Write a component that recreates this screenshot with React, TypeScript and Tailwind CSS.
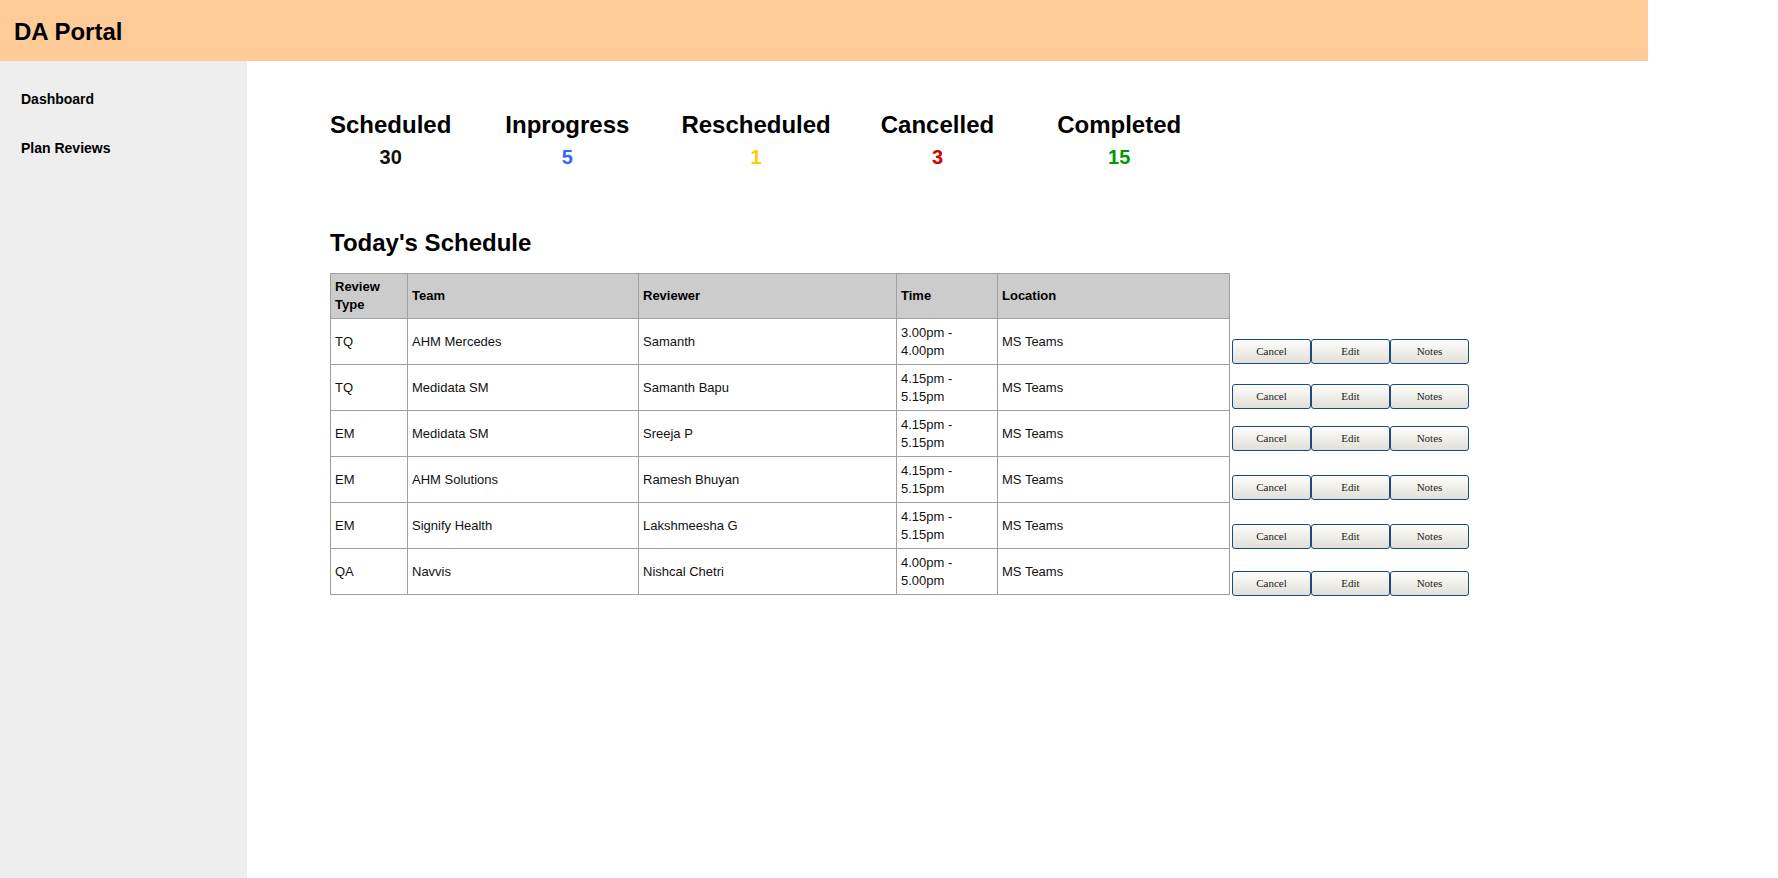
import React from "react";

const stats = [
  { label: "Scheduled", value: "30", color: "text-[#111111]", mr: "mr-[54px]" },
  { label: "Inprogress", value: "5", color: "text-[#3366ff]", mr: "mr-[52px]" },
  { label: "Rescheduled", value: "1", color: "text-[#ffcc00]", mr: "mr-[50px]" },
  { label: "Cancelled", value: "3", color: "text-[#cc0000]", mr: "mr-[63px]" },
  { label: "Completed", value: "15", color: "text-[#009900]", mr: "" },
];

const rows = [
  { type: "TQ", team: "AHM Mercedes", reviewer: "Samanth", time: "3.00pm - 4.00pm", loc: "MS Teams", off: "translate-y-[20px]" },
  { type: "TQ", team: "Medidata SM", reviewer: "Samanth Bapu", time: "4.15pm - 5.15pm", loc: "MS Teams", off: "translate-y-[19px]" },
  { type: "EM", team: "Medidata SM", reviewer: "Sreeja P", time: "4.15pm - 5.15pm", loc: "MS Teams", off: "translate-y-[15px]" },
  { type: "EM", team: "AHM Solutions", reviewer: "Ramesh Bhuyan", time: "4.15pm - 5.15pm", loc: "MS Teams", off: "translate-y-[18px]" },
  { type: "EM", team: "Signify Health", reviewer: "Lakshmeesha G", time: "4.15pm - 5.15pm", loc: "MS Teams", off: "translate-y-[21px]" },
  { type: "QA", team: "Navvis", reviewer: "Nishcal Chetri", time: "4.00pm - 5.00pm", loc: "MS Teams", off: "translate-y-[22px]" },
];

function Btn({ children }: { children: React.ReactNode }) {
  return (
    <button className="w-[79px] h-[25px] shrink-0 rounded-[3px] border border-[#1d4a7e] bg-linear-to-b from-[#fdfdfb] to-[#e2dfd8] text-[11px] leading-none text-[#222] font-['Liberation_Serif',serif]">
      {children}
    </button>
  );
}

export default function App() {
  const th = "border border-[#a0a0a0] bg-[#cccccc] text-left align-middle px-[4px] py-0 font-bold text-[13px] leading-[18px] text-black";
  const td = "border border-[#a0a0a0] align-middle px-[4px] py-0 h-[46px] text-[13px] leading-[18px] text-[#111]";
  return (
    <div className="flex flex-col h-screen font-['Liberation_Sans',Arial,sans-serif] text-black bg-white">
      <header className="w-[1648px] h-[61px] shrink-0 bg-[#ffcc99] flex items-center pl-[14px] pt-[2px]">
        <h1 className="text-[24px] leading-[28px] font-bold">DA Portal</h1>
      </header>
      <div className="flex flex-1 min-h-0">
        <aside className="w-[247px] shrink-0 bg-[#eeeeee] pt-[30px] pl-[21px]">
          <nav className="flex flex-col gap-[33px]">
            <a className="text-[14px] leading-[16px] font-bold text-black">Dashboard</a>
            <a className="text-[14px] leading-[16px] font-bold text-black">Plan Reviews</a>
          </nav>
        </aside>
        <main className="flex-1 pl-[83px] pt-[50px]">
          <div className="flex items-start">
            {stats.map((s) => (
              <div key={s.label} className={`flex flex-col items-center ${s.mr}`}>
                <div className="text-[24px] leading-[28px] font-bold">{s.label}</div>
                <div className={`mt-[7px] text-[20px] leading-[22px] font-bold ${s.color}`}>{s.value}</div>
              </div>
            ))}
          </div>
          <h2 className="mt-[61px] text-[24px] leading-[28px] font-bold">Today's Schedule</h2>
          <table className="mt-[16px] border-collapse table-fixed">
            <thead>
              <tr className="h-[45px]">
                <th className={`${th} w-[77px]`}>Review Type</th>
                <th className={`${th} w-[231px]`}>Team</th>
                <th className={`${th} w-[258px]`}>Reviewer</th>
                <th className={`${th} w-[101px]`}>Time</th>
                <th className={`${th} w-[232px]`}>Location</th>
                <th className="w-[245px] p-0"></th>
              </tr>
            </thead>
            <tbody>
              {rows.map((r, i) => (
                <tr key={i}>
                  <td className={td}>{r.type}</td>
                  <td className={td}>{r.team}</td>
                  <td className={td}>{r.reviewer}</td>
                  <td className={td}>{r.time}</td>
                  <td className={td}>{r.loc}</td>
                  <td className="p-0 pl-[2px] align-top">
                    <div className={`flex ${r.off}`}>
                      <Btn>Cancel</Btn>
                      <Btn>Edit</Btn>
                      <Btn>Notes</Btn>
                    </div>
                  </td>
                </tr>
              ))}
            </tbody>
          </table>
        </main>
      </div>
    </div>
  );
}
